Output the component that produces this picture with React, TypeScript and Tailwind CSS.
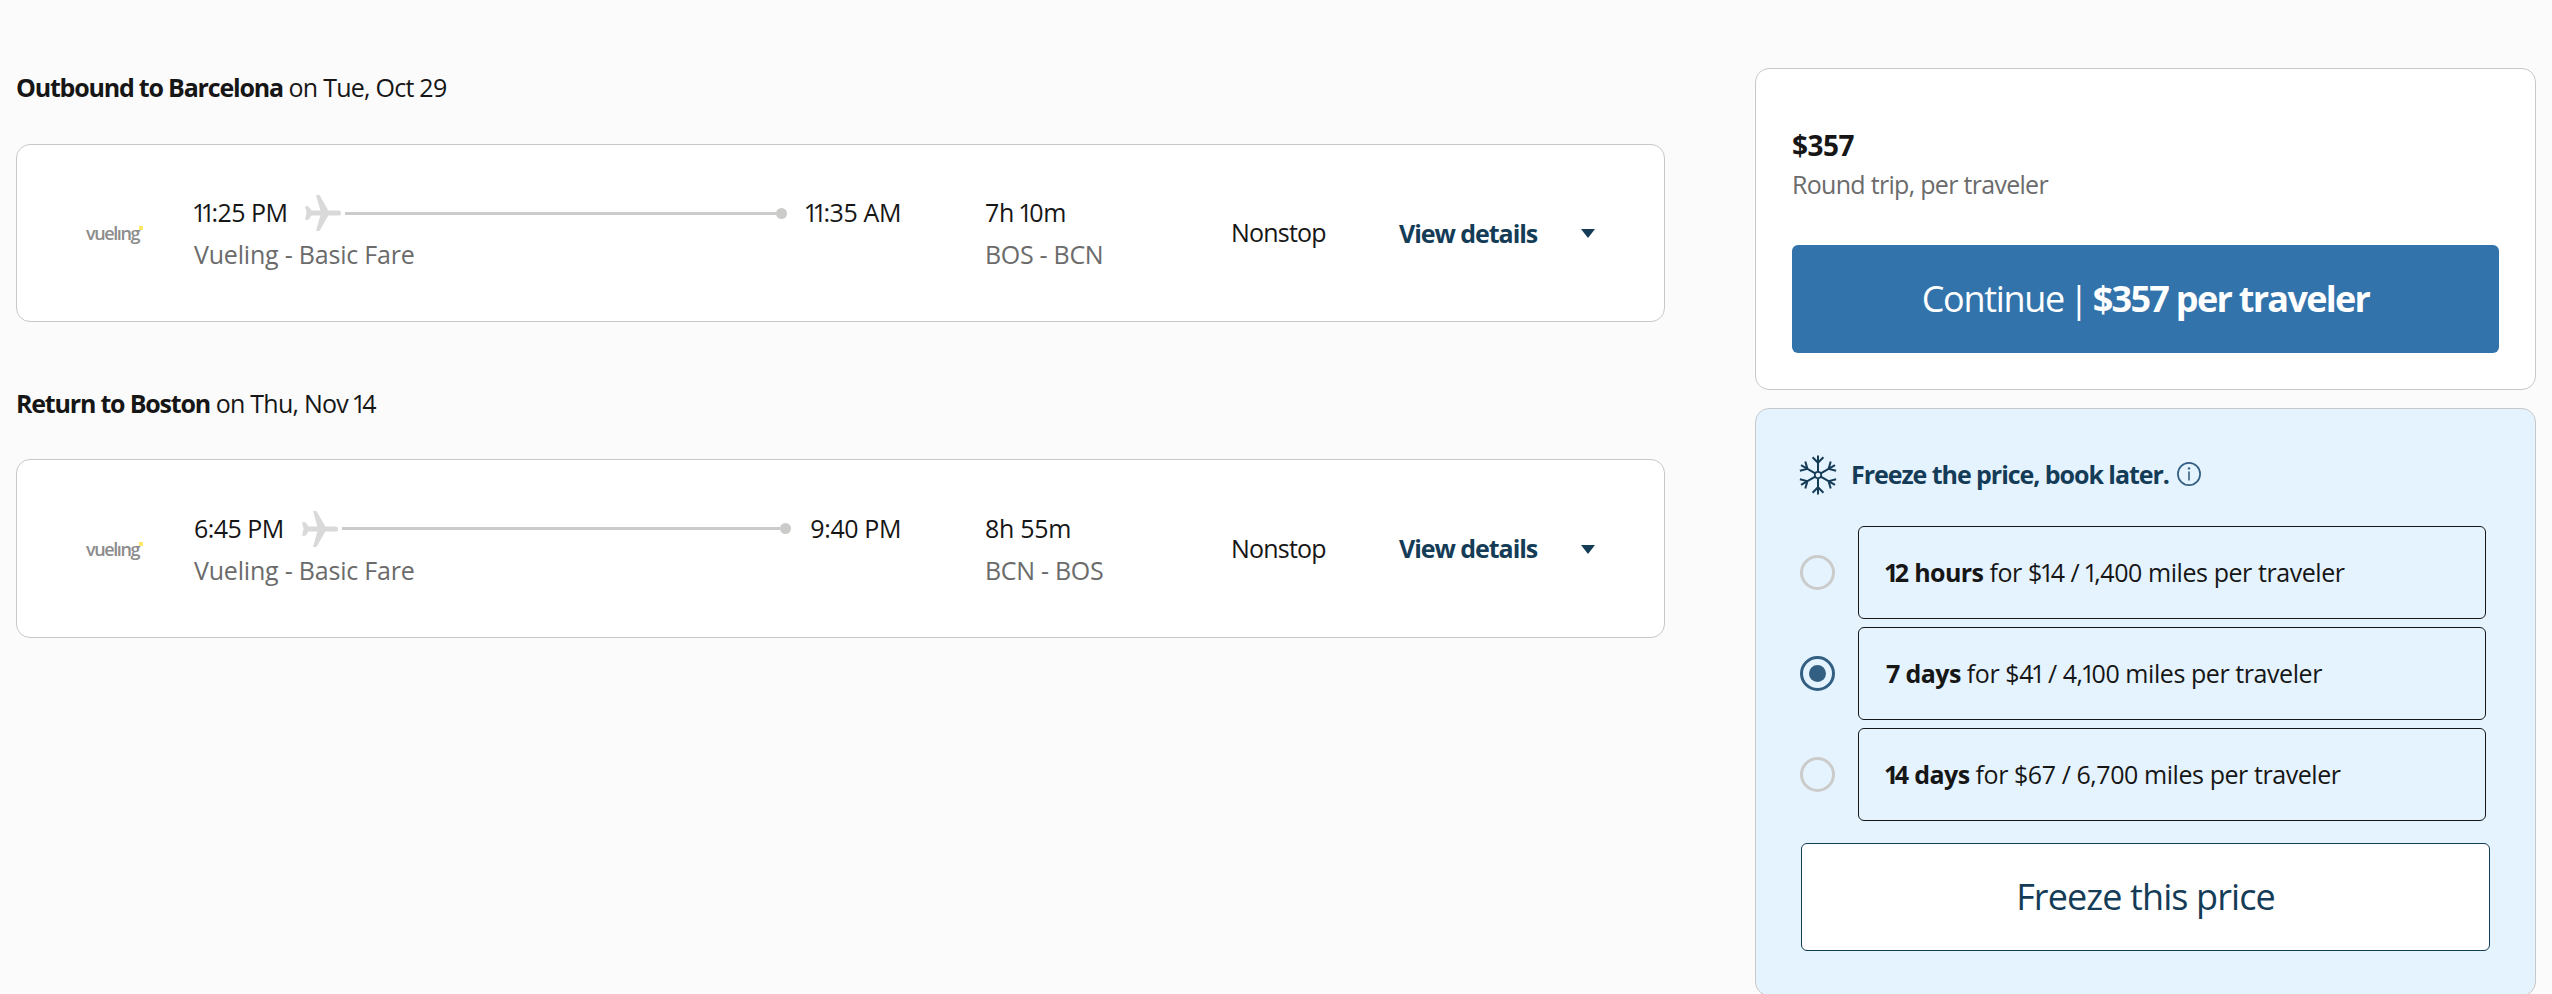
import { useState } from 'react';

interface Flight {
  id: string;
  title: string;
  date: string;
  departs: string;
  arrives: string;
  duration: string;
  route: string;
}

interface FreezeOption {
  id: string;
  length: string;
  price: string;
}

const flights: Flight[] = [
  {
    id: 'outbound',
    title: 'Outbound to Barcelona',
    date: 'on Tue, Oct 29',
    departs: '11:25 PM',
    arrives: '11:35 AM',
    duration: '7h 10m',
    route: 'BOS - BCN',
  },
  {
    id: 'return',
    title: 'Return to Boston',
    date: 'on Thu, Nov 14',
    departs: '6:45 PM',
    arrives: '9:40 PM',
    duration: '8h 55m',
    route: 'BCN - BOS',
  },
];

const freezeOptions: FreezeOption[] = [
  { id: '12h', length: '12 hours', price: 'for $14 / 1,400 miles per traveler' },
  { id: '7d', length: '7 days', price: 'for $41 / 4,100 miles per traveler' },
  { id: '14d', length: '14 days', price: 'for $67 / 6,700 miles per traveler' },
];

// Proportional figures: the 1 is set tighter than the other digits
function Figures({ text }: { text: string }) {
  return text.split(/(1)/).map((part, i) =>
    part === '1' ? (
      <span key={i} className="-mr-[3px] -ml-[2px]">
        1
      </span>
    ) : (
      part
    )
  );
}

function PlaneIcon() {
  return (
    <svg viewBox="0 0 36 36" className="h-9 w-9 shrink-0" fill="#d9d9d9">
      <path d="M11 0h2.6q1 0 1.5.9L23.3 15.4H33.4a2.6 2.6 0 0 1 0 5.2H23.3L15.1 35.1q-.5.9-1.5.9H11L15.4 20.6H6.4L3.9 24.2q-.4.6-1.2.6H0L1.6 18 0 11.2H2.7q.8 0 1.2.6L6.4 15.4H15.4Z" />
    </svg>
  );
}

function SnowflakeIcon() {
  return (
    <svg viewBox="-19 -20 38 40" className="-ml-px h-10 w-[38px] shrink-0" fill="none" stroke="#143c57" strokeWidth="2">
      <circle r="3.2" strokeWidth="1.8" />
      {[0, 60, 120, 180, 240, 300].map((angle) => (
        <path key={angle} transform={`rotate(${angle})`} d="M0 -3.2V-19.6M-5.4 -17.8L0 -12.2L5.4 -17.8" />
      ))}
    </svg>
  );
}

function InfoIcon() {
  return (
    <svg viewBox="0 0 24 24" className="h-6 w-6 shrink-0" fill="none" stroke="#335f82">
      <circle cx="12" cy="12" r="11.1" strokeWidth="1.7" />
      <path d="M12 9.4V18.6" strokeWidth="1.6" />
      <circle cx="12" cy="6.4" r="1.2" fill="#335f82" stroke="none" />
    </svg>
  );
}

function VuelingLogo() {
  return (
    <div className="relative w-[108px] text-[18px] leading-6 font-semibold tracking-[-1.4px] text-[#8c8c8c]">
      vuelıng
      <span className="absolute top-[5px] left-[53px] h-1 w-1 bg-[#ffe866]" />
    </div>
  );
}

function FlightCard({ flight }: { flight: Flight }) {
  return (
    <section>
      <h2 className="h-10 leading-10 font-normal tracking-[-0.75px]">
        <strong className="font-[670] tracking-[-1.2px]">{flight.title}</strong> <Figures text={flight.date} />
      </h2>
      <div className="mt-[36.75px] flex h-[178.5px] items-center rounded-[14px] border border-[#c8c8c8] bg-white pl-[69px]">
        <VuelingLogo />
        <div className="w-[791px] pr-[84px]">
          <div className="flex h-[42px] items-center leading-[42px] whitespace-nowrap">
            <span className="tracking-[-0.55px]">
              <Figures text={flight.departs} />
            </span>
            <span className="mt-[2px] ml-[18px] flex flex-1 items-center">
              <PlaneIcon />
              <span className="ml-1 h-[3px] flex-1 bg-[#cbcbca]" />
              <span className="h-[11px] w-[11px] rounded-full bg-[#cbcbca]" />
            </span>
            <span className="ml-[19px] tracking-[-0.4px]">
              <Figures text={flight.arrives} />
            </span>
          </div>
          <div className="leading-[42px] tracking-[-0.2px] text-[#6b6b6b]">Vueling - Basic Fare</div>
        </div>
        <div className="w-[246px] leading-[42px] tracking-[-0.3px]">
          <div>
            <Figures text={flight.duration} />
          </div>
          <div className="text-[#6b6b6b]">{flight.route}</div>
        </div>
        <div className="w-[168px] tracking-[-0.8px]">Nonstop</div>
        <button className="mt-px flex items-center font-[670] tracking-[-1.05px] text-[#143c57]">
          <span className="w-[182px] text-left">View details</span>
          <svg viewBox="0 0 14 9" className="h-[9px] w-[14px]" fill="#143c57">
            <path d="M0 0H14L7 9Z" />
          </svg>
        </button>
      </div>
    </section>
  );
}

function PriceCard() {
  return (
    <div className="h-[322px] rounded-[14px] border border-[#c8c8c8] bg-white px-9 pt-[55px]">
      <div className="h-[42px] text-[28px] leading-[42px] font-[670] tracking-[-0.5px]">$357</div>
      <div className="h-9 leading-9 tracking-[-0.7px] text-[#6b6b6b]">Round trip, per traveler</div>
      <button className="mt-[43px] h-[108px] w-full rounded-md bg-[#3273ab] text-[36px] tracking-[-1.3px] text-white">
        Continue <span className="-mx-[3px]">|</span>{' '}
        <strong className="font-[670] tracking-[-1.7px]">$357 per traveler</strong>
      </button>
    </div>
  );
}

function FreezeCard() {
  const [selected, setSelected] = useState('7d');

  return (
    <div className="mt-[18px] h-[588px] rounded-[14px] border border-[#c8c8c8] bg-[#e5f3ff] pt-[46px] pr-[45px] pl-11">
      <div className="flex h-10 items-center">
        <SnowflakeIcon />
        <span className="ml-[14px] w-[318px] font-[670] tracking-[-1.05px] whitespace-nowrap text-[#143c57]">
          Freeze the price, book later.
        </span>
        <span className="mb-[2px] ml-2">
          <InfoIcon />
        </span>
      </div>
      <div className="mt-[31px] flex flex-col gap-2">
        {freezeOptions.map((option) => (
          <label key={option.id} className="flex h-[93px] items-center pr-1">
            <input
              type="radio"
              name="freeze"
              className="sr-only"
              checked={selected === option.id}
              onChange={() => setSelected(option.id)}
            />
            <span
              className={`flex h-[35px] w-[35px] items-center justify-center rounded-full border-[3px] ${
                selected === option.id ? 'border-[#335f82]' : 'border-[#cbcbca]'
              }`}
            >
              {selected === option.id && <span className="h-[17px] w-[17px] rounded-full bg-[#335f82]" />}
            </span>
            <span className="ml-[23px] flex h-full flex-1 items-center rounded-md border border-[#161616] pl-[27px]">
              <span className="tracking-[-0.43px]">
                <strong className="font-[670] tracking-[-0.6px]">
                  <Figures text={option.length} />
                </strong>{' '}
                <Figures text={option.price} />
              </span>
            </span>
          </label>
        ))}
      </div>
      <button className="mt-[22px] ml-px block h-[108px] w-[689px] rounded-md border border-[#143c57] bg-white text-[36px] tracking-[-0.9px] text-[#143c57]">
        Freeze this price
      </button>
    </div>
  );
}

export default function App() {
  return (
    <div className="flex h-[994px] w-[2552px] overflow-hidden bg-[#fbfbfb] pl-4 font-['Open_Sans','Noto_Sans',sans-serif] text-[25px] text-[#161616]">
      <main className="flex w-[1649px] flex-col gap-[60.25px] pt-[67px]">
        {flights.map((flight) => (
          <FlightCard key={flight.id} flight={flight} />
        ))}
      </main>
      <aside className="ml-[90px] w-[781px] pt-[68px]">
        <PriceCard />
        <FreezeCard />
      </aside>
    </div>
  );
}
